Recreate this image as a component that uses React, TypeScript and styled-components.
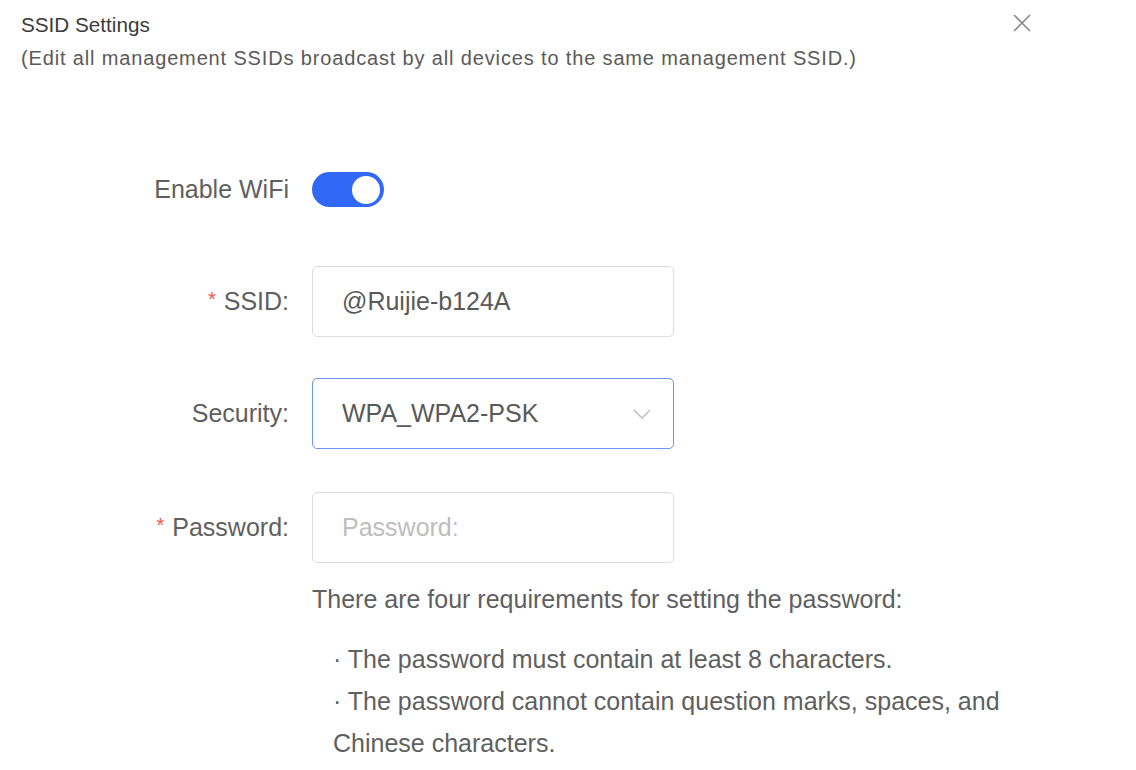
import styled, { createGlobalStyle } from "styled-components";

const Global = createGlobalStyle`
    html, body {
        margin: 0;
        padding: 0;
        background: #ffffff;
    }
    body {
        font-family: "Liberation Sans", Arial, sans-serif;
        color: #595959;
    }
`;

const Page = styled.div`
    width: 1136px;
    height: 770px;
    overflow: hidden;
    box-sizing: border-box;
    padding: 11px 0 0 21px;
`;

const Header = styled.div`
    display: flex;
    justify-content: space-between;
    align-items: flex-start;
    padding-right: 104px;
`;

const Title = styled.h2`
    margin: 0;
    font-size: 20.7px;
    font-weight: 400;
    line-height: 28px;
    color: #3a3a3a;
`;

const Sub = styled.p`
    margin: 7px 0 0;
    font-size: 20px;
    letter-spacing: 0.85px;
    line-height: 24px;
    color: #5a5a5a;
`;

const Close = styled.button`
    border: none;
    background: none;
    padding: 0;
    margin-top: 2px;
    cursor: pointer;
    display: flex;
`;

const Form = styled.div`
    display: flex;
    flex-direction: column;
    margin-top: 102px;
`;

const Row = styled.div<{ $gap?: number }>`
    display: grid;
    grid-template-columns: 268px 362px;
    column-gap: 23px;
    align-items: center;
    margin-bottom: ${(p) => p.$gap ?? 43}px;
`;

const Label = styled.label`
    text-align: right;
    font-size: 25px;
    color: #5f5f5f;
`;

const Star = styled.span`
    color: #f5554a;
    margin-right: 8px;
    font-size: 20px;
    vertical-align: 4px;
`;

const Toggle = styled.div`
    width: 72px;
    height: 35px;
    border-radius: 18px;
    background: #3168f6;
    display: flex;
    align-items: center;
    justify-content: flex-end;
    padding: 0 4px;
    box-sizing: border-box;
`;

const Knob = styled.div`
    width: 28px;
    height: 28px;
    border-radius: 50%;
    background: #ffffff;
`;

const Field = styled.div<{ $focus?: boolean }>`
    height: 71px;
    box-sizing: border-box;
    border: 1.5px solid ${(p) => (p.$focus ? "#6c93f6" : "#dcdcdc")};
    border-radius: 5px;
    display: flex;
    align-items: center;
    justify-content: space-between;
    padding: 0 22px 0 29px;
    font-size: 25px;
    color: #595959;
`;

const Placeholder = styled.span`
    color: #bdbdbd;
`;

const Help = styled.div`
    margin-left: 291px;
    width: 720px;
    font-size: 25px;
    color: #5f5f5f;
    line-height: 42px;
    margin-top: 15px;
`;

const HelpHead = styled.div`
    margin-bottom: 18px;
`;

const Item = styled.div`
    padding-left: 21px;
`;

export default function App() {
    return (
        <Page>
            <Global />
            <Header>
                <div>
                    <Title>SSID Settings</Title>
                    <Sub>(Edit all management SSIDs broadcast by all devices to the same management SSID.)</Sub>
                </div>
                <Close aria-label="close">
                    <svg width="20" height="20" viewBox="0 0 20 20">
                        <path d="M2 2 L18 18 M18 2 L2 18" stroke="#8c8c8c" strokeWidth="1.6" fill="none" />
                    </svg>
                </Close>
            </Header>
            <Form>
                <Row $gap={59}>
                    <Label>Enable WiFi</Label>
                    <Toggle>
                        <Knob />
                    </Toggle>
                </Row>
                <Row $gap={41}>
                    <Label>
                        <Star>*</Star>SSID:
                    </Label>
                    <Field>@Ruijie-b124A</Field>
                </Row>
                <Row>
                    <Label>Security:</Label>
                    <Field $focus>
                        WPA_WPA2-PSK
                        <svg width="18" height="10" viewBox="0 0 18 10">
                            <path d="M1 1 L9 9 L17 1" stroke="#bfbfbf" strokeWidth="1.5" fill="none" />
                        </svg>
                    </Field>
                </Row>
                <Row $gap={0}>
                    <Label>
                        <Star>*</Star>Password:
                    </Label>
                    <Field>
                        <Placeholder>Password:</Placeholder>
                    </Field>
                </Row>
                <Help>
                    <HelpHead>There are four requirements for setting the password:</HelpHead>
                    <Item>· The password must contain at least 8 characters.</Item>
                    <Item>· The password cannot contain question marks, spaces, and Chinese characters.</Item>
                </Help>
            </Form>
        </Page>
    );
}
